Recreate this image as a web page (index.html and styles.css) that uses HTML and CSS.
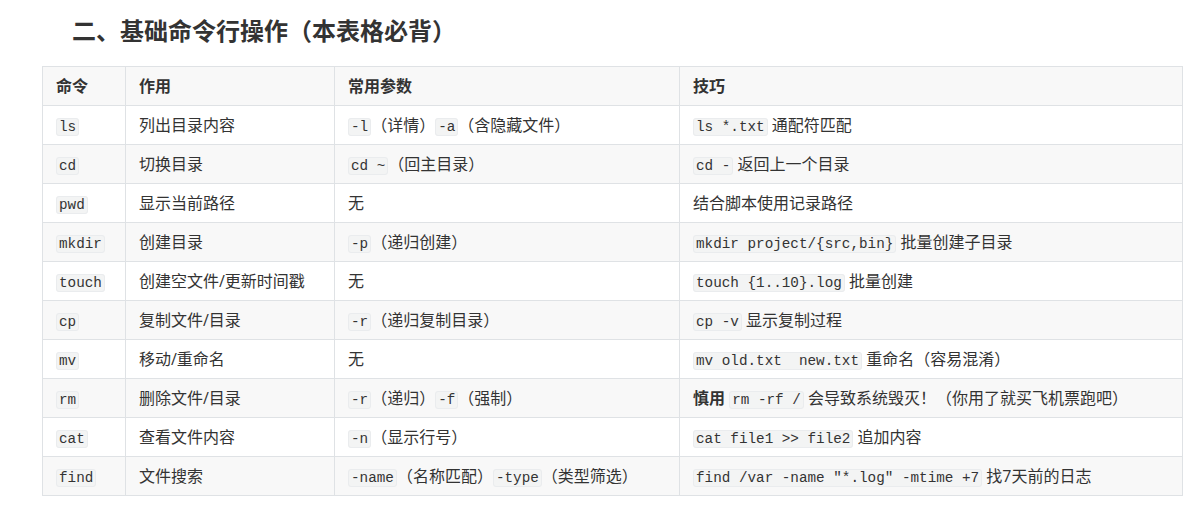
FILE: index.html
```html
<!DOCTYPE html>
<html lang="zh-CN">
<head>
<meta charset="utf-8">
<title>基础命令行操作</title>
<link rel="stylesheet" href="styles.css">
</head>
<body>
<div class="page">
  <h3 class="title">二、基础命令行操作（本表格必背）</h3>
  <table class="cmd-table">
    <colgroup>
      <col class="c1"><col class="c2"><col class="c3"><col class="c4">
    </colgroup>
    <thead>
      <tr><th>命令</th><th>作用</th><th>常用参数</th><th>技巧</th></tr>
    </thead>
    <tbody>
      <tr><td><code>ls</code></td><td>列出目录内容</td><td><code>-l</code>（详情）<code>-a</code>（含隐藏文件）</td><td><code>ls *.txt</code> 通配符匹配</td></tr>
      <tr><td><code>cd</code></td><td>切换目录</td><td><code>cd ~</code>（回主目录）</td><td><code>cd -</code> 返回上一个目录</td></tr>
      <tr><td><code>pwd</code></td><td>显示当前路径</td><td>无</td><td>结合脚本使用记录路径</td></tr>
      <tr><td><code>mkdir</code></td><td>创建目录</td><td><code>-p</code>（递归创建）</td><td><code>mkdir project/{src,bin}</code> 批量创建子目录</td></tr>
      <tr><td><code>touch</code></td><td>创建空文件/更新时间戳</td><td>无</td><td><code>touch {1..10}.log</code> 批量创建</td></tr>
      <tr><td><code>cp</code></td><td>复制文件/目录</td><td><code>-r</code>（递归复制目录）</td><td><code>cp -v</code> 显示复制过程</td></tr>
      <tr><td><code>mv</code></td><td>移动/重命名</td><td>无</td><td><code>mv old.txt  new.txt</code> 重命名（容易混淆）</td></tr>
      <tr><td><code>rm</code></td><td>删除文件/目录</td><td><code>-r</code>（递归）<code>-f</code>（强制）</td><td><strong>慎用</strong> <code>rm -rf /</code> 会导致系统毁灭！（你用了就买飞机票跑吧）</td></tr>
      <tr><td><code>cat</code></td><td>查看文件内容</td><td><code>-n</code>（显示行号）</td><td><code>cat file1 &gt;&gt; file2</code> 追加内容</td></tr>
      <tr><td><code>find</code></td><td>文件搜索</td><td><code>-name</code>（名称匹配）<code>-type</code>（类型筛选）</td><td><code>find /var -name "*.log" -mtime +7</code> 找7天前的日志</td></tr>
    </tbody>
  </table>
</div>
</body>
</html>
```

FILE: styles.css
```css
html, body {
  margin: 0;
  padding: 0;
  background: #ffffff;
}

.page {
  padding: 14px 15px 0 42px;
  font-family: "Open Sans", "Noto Sans CJK SC", sans-serif;
  font-size: 16px;
  color: #333333;
}

.title {
  margin: 0 0 18px 0;
  padding-left: 30px;
  font-size: 24px;
  line-height: 34px;
  font-weight: bold;
  color: #333333;
}

.cmd-table {
  border-collapse: collapse;
  width: 1140px;
  table-layout: fixed;
}

.c1 { width: 83px; }
.c2 { width: 209px; }
.c3 { width: 345px; }
.c4 { width: 503px; }

.cmd-table tr {
  height: 39px;
}

.cmd-table th,
.cmd-table td {
  border: 1px solid #dfe2e5;
  padding: 0 13px;
  line-height: 20px;
  text-align: left;
  white-space: nowrap;
  vertical-align: middle;
}

.cmd-table th {
  font-weight: bold;
}

.cmd-table thead tr,
.cmd-table tbody tr:nth-child(2n) {
  background: #f8f8f8;
}

.cmd-table code {
  font-family: "Liberation Mono", "DejaVu Sans Mono", monospace;
  font-size: 14.3px;
  line-height: 18px;
  background: #f3f4f4;
  border: 1px solid #eaecee;
  border-radius: 3px;
  padding: 0 2px;
  white-space: pre;
  color: #333333;
}

.cmd-table strong {
  font-weight: bold;
}
```
